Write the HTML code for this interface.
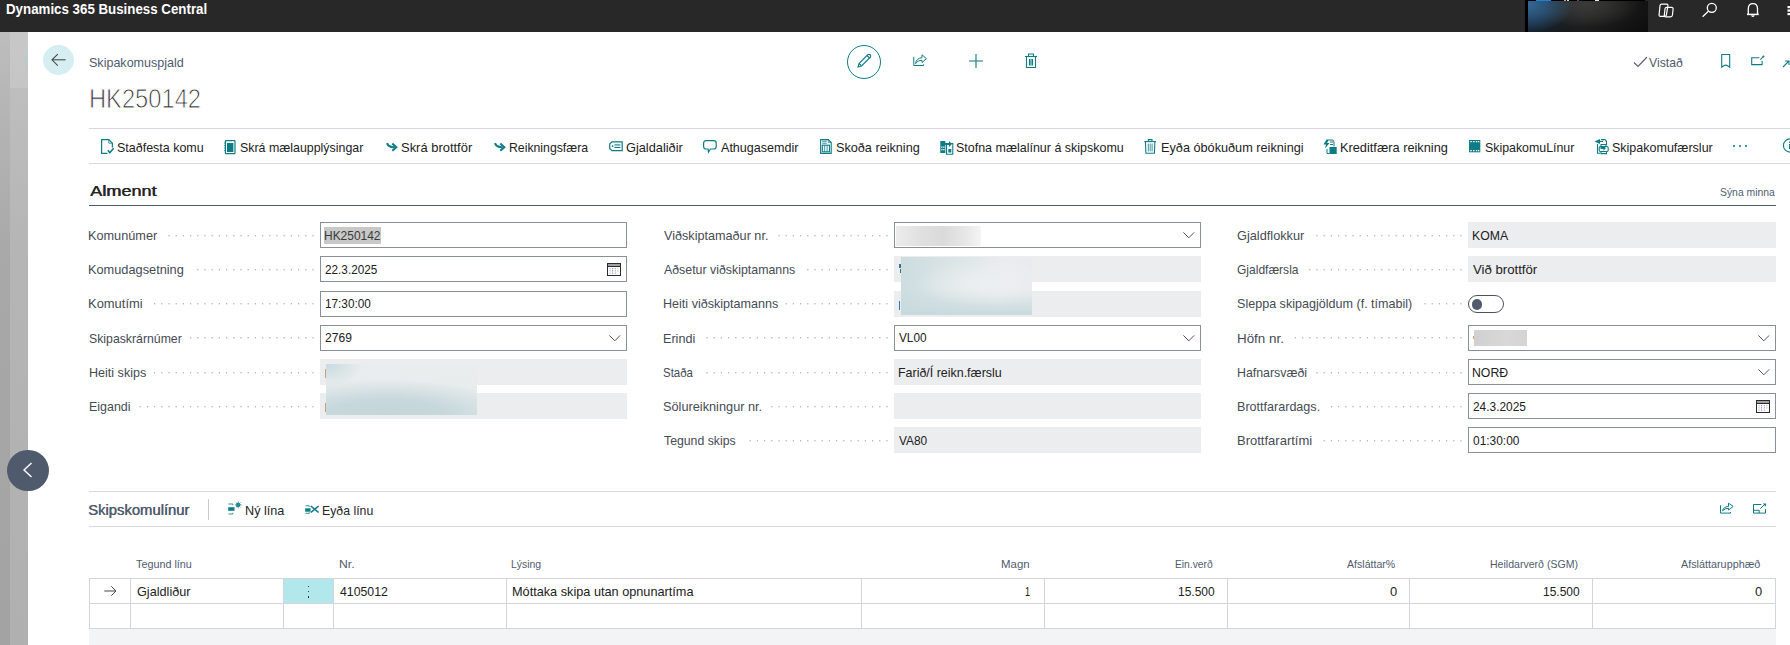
<!DOCTYPE html>
<html><head><meta charset="utf-8"><title>Skipakomuspjald</title>
<style>
html,body{margin:0;padding:0;}
body{width:1790px;height:645px;overflow:hidden;position:relative;background:#fff;font-family:"Liberation Sans",sans-serif;}
.a{position:absolute;}
.t{position:absolute;white-space:nowrap;line-height:1;transform-origin:left top;}
svg.a{overflow:visible;}
</style></head><body>
<div class="a" style="left:0px;top:0px;width:1790px;height:32px;background:#282828;"></div>
<div class="t" style="left:5.70px;top:1.95px;font-size:14px;color:#ffffff;font-weight:700;transform:scaleX(0.9506);">Dynamics 365 Business Central</div>
<div class="a" style="left:1525px;top:0px;width:120px;height:1.3px;background:#000;"></div>
<div class="a" style="left:1536px;top:0px;width:15px;height:1.3px;background:#1f7fd0;"></div>
<div class="a" style="left:1563.5px;top:0px;width:2px;height:1.3px;background:#e0a020;"></div>
<div class="a" style="left:1567px;top:0px;width:2px;height:1.3px;background:#c0d8f0;"></div>
<div class="a" style="left:1577px;top:0px;width:1.2px;height:1.3px;background:#c02020;"></div>
<div class="a" style="left:1578.3px;top:0px;width:1px;height:1.3px;background:#2040c0;"></div>
<div class="a" style="left:1595px;top:0px;width:4px;height:1.3px;background:#f0e8c0;"></div>
<div class="a" style="left:1525px;top:1.3px;width:3px;height:30.7px;background:#000;"></div>
<div class="a" style="left:1528px;top:1.2px;width:120px;height:30.8px;background:radial-gradient(ellipse 38% 90% at 0% 10%,rgba(52,104,150,1) 0%,rgba(45,90,130,0.75) 45%,rgba(40,70,100,0) 100%),radial-gradient(ellipse 45% 75% at 48% 10%,rgba(58,58,56,1),rgba(58,58,56,0) 100%),linear-gradient(180deg,rgba(0,0,0,0) 35%,rgba(0,0,0,0.3) 100%),linear-gradient(90deg,#1c3247 0%,#20262b 28%,#262626 50%,#121212 100%);"></div>
<svg class="a" style="left:1658px;top:3px" width="17" height="15" viewBox="0 0 17 15"><g fill="none" stroke="#fff" stroke-width="1.2"><path d="M3.6 1.2 L8.6 1.2 Q10.2 1.3 9.9 2.9 L8.4 11.8 Q8.1 13.3 6.6 13.3 L2.4 13.3 Q0.9 13.2 1.1 11.7 L2 2.7 Q2.2 1.2 3.6 1.2 Z"/><path d="M8.6 4.3 L13.6 4.3 Q15.3 4.4 15.1 6 L14.4 12.2 Q14.2 13.8 12.6 13.8 L7.6 13.8 Q6.1 13.7 6.3 12.2 L7 5.8 Q7.2 4.3 8.6 4.3 Z"/></g></svg>
<svg class="a" style="left:1701px;top:2px" width="17" height="16" viewBox="0 0 17 16"><g fill="none" stroke="#fff" stroke-width="1.3"><circle cx="10.8" cy="5.8" r="4.5"/><path d="M7.4 9.3 L1.6 14.7"/></g></svg>
<svg class="a" style="left:1745px;top:2px" width="16" height="16" viewBox="0 0 16 16"><g fill="none" stroke="#fff" stroke-width="1.3"><path d="M3.3 12.3 L3.3 6.6 Q3.3 1.6 7.9 1.6 Q12.5 1.6 12.5 6.6 L12.5 12.3"/><path d="M2 12.4 L13.8 12.4" stroke-width="1.5"/><path d="M6.6 13.4 Q7.9 15.2 9.2 13.4"/></g></svg>
<svg class="a" style="left:1786px;top:5px" width="4" height="12" viewBox="0 0 4 12"><g fill="#fff"><rect x="1.5" y="1" width="2.5" height="2.2"/><rect x="1.5" y="4.5" width="2.5" height="2.2"/><rect x="1.5" y="8" width="2.5" height="2.2"/></g></svg>
<div class="a" style="left:0px;top:32px;width:10px;height:613px;background:linear-gradient(#bdbdbd 0px,#b4b4b4 90px,#a8a8a8 230px,#a3a3a3 613px);"></div>
<div class="a" style="left:10px;top:32px;width:18px;height:613px;background:linear-gradient(#c8c8c8 0px,#c5c5c5 56px,#bebebe 56px,#b5b5b5 220px,#b0b0b0 613px);"></div>
<div class="a" style="left:10px;top:40px;width:18px;height:40px;overflow:hidden"><div class="a" style="left:15px;top:4.5px;width:31px;height:31px;border-radius:50%;background:#bacbcd"></div></div>
<div class="a" style="left:7px;top:449.5px;width:41.5px;height:41.5px;border-radius:50%;background:#4f5b6d"></div>
<svg class="a" style="left:22px;top:462px" width="11" height="16" viewBox="0 0 11 16"><path d="M9.5 1 L2 8 L9.5 15" fill="none" stroke="#fff" stroke-width="1.4"/></svg>
<div class="a" style="left:43px;top:45px;width:31px;height:30px;border-radius:50%;background:#d6eef1"></div>
<svg class="a" style="left:50px;top:53px" width="17" height="15" viewBox="0 0 17 15"><g fill="none" stroke="#444" stroke-width="1.05"><path d="M2 6.8 L15.6 6.8"/><path d="M7.8 1.2 L2 6.8 L7.8 12.6"/></g></svg>
<div class="t" style="left:89.07px;top:56.00px;font-size:13px;color:#505c6d;font-weight:400;transform:scaleX(0.9646);">Skipakomuspjald</div>
<div class="t" style="left:89.10px;top:85.01px;font-size:27.4px;color:#2e2e2e;font-weight:400;transform:scaleX(0.8656);-webkit-text-stroke:0.9px #fff">HK250142</div>
<div class="a" style="left:847px;top:45px;width:34px;height:34px;box-sizing:border-box;border-radius:50%;border:1.5px solid #0e7c86"></div>
<svg class="a" style="left:856px;top:53px" width="16" height="16" viewBox="0 0 16 16"><g fill="none" stroke="#0e7c86" stroke-width="1.1"><path d="M2 14 L3 10.5 L12 1.5 Q13.5 1 14.5 2 Q15 3.5 14.5 4 L5.5 13 Z"/><path d="M3 10.5 L5.5 13"/><path d="M11 2.5 L13.5 5"/></g></svg>
<svg class="a" style="left:911px;top:53px" width="17" height="15" viewBox="0 0 17 15"><g fill="none" stroke="#0e7c86" stroke-width="1"><path d="M2.8 3.8 V12.5 H12.6 V11.3"/><path d="M4.6 10.6 C4.8 7 7.5 4.9 11 4.7 L11 1.8 L15.4 5.7 L11 9.5 L11 7.3 C8.2 7.3 6 8.5 4.6 10.6 Z" stroke-linejoin="round"/></g></svg>
<svg class="a" style="left:968px;top:53px" width="16" height="16" viewBox="0 0 16 16"><g stroke="#0e7c86" stroke-width="1.1"><path d="M8 1 L8 15 M1 8 L15 8"/></g></svg>
<svg class="a" style="left:1024px;top:53px" width="14" height="16" viewBox="0 0 14 16"><g fill="none" stroke="#0e7c86" stroke-width="1.1"><path d="M1 3.5 L13 3.5"/><path d="M4.5 3.5 L4.5 1 L9.5 1 L9.5 3.5"/><path d="M2.5 3.5 L2.5 14.5 L11.5 14.5 L11.5 3.5"/><path d="M5.5 6 L5.5 12.5 M7 6 L7 12.5 M8.5 6 L8.5 12.5"/></g></svg>
<svg class="a" style="left:1633px;top:56px" width="15" height="12" viewBox="0 0 15 12"><path d="M1 6.5 L5 10.5 L14 1" fill="none" stroke="#505c6d" stroke-width="1.1"/></svg>
<div class="t" style="left:1649.00px;top:56.00px;font-size:13px;color:#505c6d;font-weight:400;transform:scaleX(0.9411);">Vistað</div>
<svg class="a" style="left:1720px;top:53px" width="12" height="16" viewBox="0 0 12 16"><path d="M1.7 1.5 L9.7 1.5 L9.7 14.2 L7.6 12.7 Q5.7 11.5 3.8 12.7 L1.7 14.2 Z" fill="none" stroke="#0e7c86" stroke-width="1.1"/></svg>
<svg class="a" style="left:1750px;top:54px" width="15" height="13" viewBox="0 0 15 13"><g fill="none" stroke="#0e7c86" stroke-width="1.1"><path d="M9.4 3.7 L1.7 3.7 L1.7 10.6 L12.1 10.6 L12.1 6.7"/><path d="M10.3 5.6 L13.3 2.6"/></g><circle cx="13.5" cy="2.4" r="1" fill="#0e7c86"/></svg>
<svg class="a" style="left:1782px;top:57px" width="8" height="11" viewBox="0 0 8 11"><g fill="none" stroke="#0e7c86" stroke-width="1.1"><path d="M1 10 L7 4 M3 4 L7 4 L7 8"/></g></svg>
<div class="a" style="left:89px;top:128px;width:1701px;height:1px;background:#d5d8dc;"></div>
<div class="a" style="left:89px;top:163px;width:1701px;height:1px;background:#d5d8dc;"></div>
<div class="t" style="left:116.88px;top:140.97px;font-size:13.5px;color:#222222;font-weight:400;transform:scaleX(0.9240);">Staðfesta komu</div>
<div class="t" style="left:240.38px;top:140.97px;font-size:13.5px;color:#222222;font-weight:400;transform:scaleX(0.9182);">Skrá mælaupplýsingar</div>
<div class="t" style="left:401.15px;top:140.97px;font-size:13.5px;color:#222222;font-weight:400;transform:scaleX(0.9586);">Skrá brottför</div>
<div class="t" style="left:509.42px;top:140.97px;font-size:13.5px;color:#222222;font-weight:400;transform:scaleX(0.9082);">Reikningsfæra</div>
<div class="t" style="left:625.76px;top:140.97px;font-size:13.5px;color:#222222;font-weight:400;transform:scaleX(0.9454);">Gjaldaliðir</div>
<div class="t" style="left:720.90px;top:140.97px;font-size:13.5px;color:#222222;font-weight:400;transform:scaleX(0.9307);">Athugasemdir</div>
<div class="t" style="left:835.57px;top:140.97px;font-size:13.5px;color:#222222;font-weight:400;transform:scaleX(0.9379);">Skoða reikning</div>
<div class="t" style="left:956.18px;top:140.97px;font-size:13.5px;color:#222222;font-weight:400;transform:scaleX(0.9236);">Stofna mælalínur á skipskomu</div>
<div class="t" style="left:1160.58px;top:140.97px;font-size:13.5px;color:#222222;font-weight:400;transform:scaleX(0.9405);">Eyða óbókuðum reikningi</div>
<div class="t" style="left:1340.38px;top:140.97px;font-size:13.5px;color:#222222;font-weight:400;transform:scaleX(0.9460);">Kreditfæra reikning</div>
<div class="t" style="left:1485.18px;top:140.97px;font-size:13.5px;color:#222222;font-weight:400;transform:scaleX(0.9156);">SkipakomuLínur</div>
<div class="t" style="left:1612.07px;top:140.97px;font-size:13.5px;color:#222222;font-weight:400;transform:scaleX(0.9262);">Skipakomufærslur</div>
<svg class="a" style="left:100.8px;top:139px" width="15" height="16" viewBox="0 0 15 16"><g fill="none" stroke="#0e7c86" stroke-width="1.2"><path d="M6.5 14.4 L0.6 14.4 L0.6 0.6 L7.8 0.6 L11.4 4.2 L11.4 8.5"/><path d="M7.8 0.6 L7.8 4.2 L11.4 4.2" stroke-width="0.8"/><path d="M6.8 11.3 L8.8 13.8 L12.6 9.2" stroke-width="1.5"/></g></svg>
<svg class="a" style="left:224.2px;top:139.5px" width="15" height="16" viewBox="0 0 15 16"><g><rect x="1.4" y="0.6" width="9.6" height="13" rx="0.6" fill="none" stroke="#0e7c86" stroke-width="1.2"/><rect x="3" y="3" width="6.4" height="9" fill="#0e7c86"/><path d="M0.2 3 h1.6 M0.2 5.5 h1.6 M0.2 8 h1.6 M0.2 10.5 h1.6" stroke="#0e7c86" stroke-width="0.9"/></g></svg>
<svg class="a" style="left:385.8px;top:142.4px" width="15" height="16" viewBox="0 0 15 16"><g fill="none" stroke="#0e7c86" stroke-width="2.1" stroke-linejoin="miter"><path d="M1 1.2 Q2.5 5.5 8.5 5.2"/><path d="M6.3 1.4 L10.3 5.2 L6.3 8.8"/></g></svg>
<svg class="a" style="left:494.4px;top:142.4px" width="15" height="16" viewBox="0 0 15 16"><g fill="none" stroke="#0e7c86" stroke-width="2.1" stroke-linejoin="miter"><path d="M1 1.2 Q2.5 5.5 8.5 5.2"/><path d="M6.3 1.4 L10.3 5.2 L6.3 8.8"/></g></svg>
<svg class="a" style="left:609px;top:140.6px" width="15" height="16" viewBox="0 0 15 16"><g fill="none" stroke="#0e7c86" stroke-width="1.2"><path d="M3 0.8 L13.2 0.8 L13.2 9.7 L3 9.7 L0.7 7.5 L0.7 3 Z"/></g><g fill="#0e7c86"><circle cx="3.6" cy="5.1" r="0.9"/><rect x="5.4" y="3.4" width="6" height="1.1"/><rect x="5.4" y="5.9" width="6" height="1.1"/></g></svg>
<svg class="a" style="left:702.6px;top:139.8px" width="15" height="16" viewBox="0 0 15 16"><path d="M3 0.7 L10.8 0.7 Q13.2 0.7 13.2 3.2 L13.2 6.5 Q13.2 9 10.8 9 L7.5 9 L5.5 12 L5.1 9 L3 9 Q0.6 9 0.6 6.5 L0.6 3.2 Q0.6 0.7 3 0.7 Z" fill="none" stroke="#0e7c86" stroke-width="1.2"/></svg>
<svg class="a" style="left:819.8px;top:139px" width="15" height="16" viewBox="0 0 15 16"><g fill="none" stroke="#0e7c86" stroke-width="1.1"><path d="M0.6 0.6 L8.3 0.6 L11.2 3.5 L11.2 14.4 L0.6 14.4 Z"/><path d="M8.3 0.6 L8.3 3.5 L11.2 3.5" stroke-width="0.7"/><path d="M2.2 2.2 h4.5 M2.2 4.2 h4.5" stroke-width="0.9"/><rect x="2.3" y="6.2" width="7.2" height="6.6"/><path d="M4.7 6.2 v6.6 M7.1 6.2 v6.6" stroke-width="0.8"/></g></svg>
<svg class="a" style="left:940px;top:139.8px" width="15" height="16" viewBox="0 0 15 16"><g fill="#0e7c86"><rect x="0.3" y="1" width="5" height="12" /><path d="M6.5 3.5 L12.8 3.5 L12.8 14.2 L6.5 14.2 Z" fill="none" stroke="#0e7c86" stroke-width="1.1"/><path d="M4.5 3 L9 3 L9 1 L12 4 L9 7 L9 5 L4.5 5 Z"/><rect x="8.3" y="9" width="3" height="3.5"/></g><g fill="#fff"><rect x="1.2" y="6.5" width="1.3" height="1.3"/><rect x="3.2" y="6.5" width="1.3" height="1.3"/><rect x="1.2" y="9" width="1.3" height="1.3"/><rect x="3.2" y="9" width="1.3" height="1.3"/></g></svg>
<svg class="a" style="left:1144px;top:139px" width="15" height="16" viewBox="0 0 15 16"><g fill="none" stroke="#0e7c86" stroke-width="1.1"><path d="M0.3 2.6 L12 2.6"/><path d="M4.3 2.4 L4.3 0.6 L8 0.6 L8 2.4"/><path d="M1.4 2.6 L1.9 14.3 L10.4 14.3 L10.9 2.6"/></g><g fill="#0e7c86" opacity="0.8"><rect x="3.8" y="4.6" width="1" height="7.8"/><rect x="5.7" y="4.6" width="1" height="7.8"/><rect x="7.6" y="4.6" width="1" height="7.8"/></g></svg>
<svg class="a" style="left:1323px;top:139px" width="15" height="16" viewBox="0 0 15 16"><g fill="#0e7c86"><path d="M3.5 0.5 L6 0.5 L4 4 L6.5 4 L2 9.5 L3 5.5 L0.5 5.5 Z"/><rect x="6.5" y="8" width="7.2" height="7"/></g><g fill="none" stroke="#0e7c86" stroke-width="1"><path d="M5.5 1 L10 1 L11 3 L11 7.5"/><path d="M4 10 L4 14.5 L6.5 14.5"/><path d="M7 3 h3 M7 5.5 h3"/></g></svg>
<svg class="a" style="left:1469px;top:139.8px" width="15" height="16" viewBox="0 0 15 16"><g><rect x="0" y="0" width="11.3" height="12.3" fill="#0e7c86"/><g fill="#fff"><rect x="1.2" y="1" width="1.5" height="1.3"/><rect x="4" y="1" width="1.5" height="1.3"/><rect x="6.8" y="1" width="1.5" height="1.3"/><rect x="9" y="1" width="1.3" height="1.3"/><rect x="1.2" y="10" width="1.5" height="1.3"/><rect x="4" y="10" width="1.5" height="1.3"/><rect x="6.8" y="10" width="1.5" height="1.3"/><rect x="9" y="10" width="1.3" height="1.3"/></g></g></svg>
<svg class="a" style="left:1595.4px;top:139px" width="15" height="16" viewBox="0 0 15 16"><g fill="none" stroke="#0e7c86" stroke-width="1.1"><path d="M2.5 5 L2.5 14.3 L5 14.3"/><path d="M6 0.6 L10 0.6 L11.5 2.5 L11.5 6"/><path d="M0.8 2.5 L4.5 0.8 L4.5 4.2 Z" fill="#0e7c86"/><path d="M4.5 2.5 L8 2.5"/><rect x="4.2" y="7.5" width="9" height="5" rx="1.2"/><path d="M6 12.5 L6 14.6 L11.5 14.6 L11.5 12.5"/><path d="M6 7.5 L6 5.5 L11 5.5 L11 7.5"/></g><path d="M5.5 8 L8.5 8 L8.5 6.5 L11 9 L8.5 11.5 L8.5 10 L5.5 10 Z" fill="#0e7c86"/></svg>
<div class="a" style="left:1733.3px;top:145px;width:1.8px;height:1.8px;background:#0e7c86;border-radius:50%"></div>
<div class="a" style="left:1739.1px;top:145px;width:1.8px;height:1.8px;background:#0e7c86;border-radius:50%"></div>
<div class="a" style="left:1744.8999999999999px;top:145px;width:1.8px;height:1.8px;background:#0e7c86;border-radius:50%"></div>
<svg class="a" style="left:1782px;top:138px" width="8" height="16" viewBox="0 0 8 16"><circle cx="8" cy="7.5" r="6.6" fill="none" stroke="#0e7c86" stroke-width="1.1"/><path d="M7.6 6 v5 M7.6 3.6 v1.2" stroke="#0e7c86" stroke-width="1.2"/></svg>
<div class="t" style="left:89.50px;top:184.27px;font-size:14.8px;color:#262626;font-weight:400;transform:scaleX(1.2221);text-shadow:0.5px 0 0 #262626">Almennt</div>
<div class="t" style="left:1720.38px;top:187.32px;font-size:11.2px;color:#505c6d;font-weight:400;transform:scaleX(0.9287);">Sýna minna</div>
<div class="a" style="left:89px;top:205px;width:1687px;height:1.2px;background:#505c6d;"></div>
<div class="t" style="left:88.48px;top:230.03px;font-size:12.6px;color:#454b54;font-weight:400;transform:scaleX(1.0088);">Komunúmer</div>
<svg class="a" style="left:170px;top:234.90px" width="150" height="2" viewBox="0 0 150 2"><g fill="#b0b5bc"><rect x="142.40" y="0" width="1.2" height="1.4"/><rect x="135.20" y="0" width="1.2" height="1.4"/><rect x="128.00" y="0" width="1.2" height="1.4"/><rect x="120.80" y="0" width="1.2" height="1.4"/><rect x="113.60" y="0" width="1.2" height="1.4"/><rect x="106.40" y="0" width="1.2" height="1.4"/><rect x="99.20" y="0" width="1.2" height="1.4"/><rect x="92.00" y="0" width="1.2" height="1.4"/><rect x="84.80" y="0" width="1.2" height="1.4"/><rect x="77.60" y="0" width="1.2" height="1.4"/><rect x="70.40" y="0" width="1.2" height="1.4"/><rect x="63.20" y="0" width="1.2" height="1.4"/><rect x="56.00" y="0" width="1.2" height="1.4"/><rect x="48.80" y="0" width="1.2" height="1.4"/><rect x="41.60" y="0" width="1.2" height="1.4"/><rect x="34.40" y="0" width="1.2" height="1.4"/><rect x="27.20" y="0" width="1.2" height="1.4"/><rect x="20.00" y="0" width="1.2" height="1.4"/><rect x="12.80" y="0" width="1.2" height="1.4"/><rect x="5.60" y="0" width="1.2" height="1.4"/><rect x="-1.60" y="0" width="1.2" height="1.4"/></g></svg>
<div class="a" style="left:320px;top:222.30px;width:307px;height:26px;box-sizing:border-box;border:1px solid #8a9098;background:#fff"></div>
<div class="a" style="left:324px;top:227.30px;width:57px;height:16.5px;background:#c8c8c8;"></div>
<div class="t" style="left:324.44px;top:229.86px;font-size:12.8px;color:#3a3a3a;font-weight:400;transform:scaleX(0.9341);">HK250142</div>
<div class="t" style="left:88.48px;top:264.20px;font-size:12.6px;color:#454b54;font-weight:400;transform:scaleX(1.0136);">Komudagsetning</div>
<svg class="a" style="left:170px;top:269.07px" width="150" height="2" viewBox="0 0 150 2"><g fill="#b0b5bc"><rect x="142.40" y="0" width="1.2" height="1.4"/><rect x="135.20" y="0" width="1.2" height="1.4"/><rect x="128.00" y="0" width="1.2" height="1.4"/><rect x="120.80" y="0" width="1.2" height="1.4"/><rect x="113.60" y="0" width="1.2" height="1.4"/><rect x="106.40" y="0" width="1.2" height="1.4"/><rect x="99.20" y="0" width="1.2" height="1.4"/><rect x="92.00" y="0" width="1.2" height="1.4"/><rect x="84.80" y="0" width="1.2" height="1.4"/><rect x="77.60" y="0" width="1.2" height="1.4"/><rect x="70.40" y="0" width="1.2" height="1.4"/><rect x="63.20" y="0" width="1.2" height="1.4"/><rect x="56.00" y="0" width="1.2" height="1.4"/><rect x="48.80" y="0" width="1.2" height="1.4"/><rect x="41.60" y="0" width="1.2" height="1.4"/><rect x="34.40" y="0" width="1.2" height="1.4"/><rect x="27.20" y="0" width="1.2" height="1.4"/></g></svg>
<div class="a" style="left:320px;top:256.47px;width:307px;height:26px;box-sizing:border-box;border:1px solid #8a9098;background:#fff"></div>
<div class="t" style="left:324.81px;top:264.03px;font-size:12.8px;color:#212121;font-weight:400;transform:scaleX(0.9192);">22.3.2025</div>
<svg class="a" style="left:607px;top:263px" width="15" height="14" viewBox="0 0 15 14"><rect x="0.5" y="0.5" width="13" height="12" fill="none" stroke="#2a2a2a" stroke-width="1"/><rect x="1" y="1" width="12" height="2" fill="#a0a0a0"/><path d="M0.5 3.5 H13.5" stroke="#2a2a2a" stroke-width="1"/><g stroke-width="1" stroke-dasharray="1 1.2"><path d="M3 5.2 V10.6" stroke="#7fa0d0"/><path d="M5.6 5.2 V10.6" stroke="#8a5aa0"/><path d="M8.3 5.2 V10.6" stroke="#5a90d0"/><path d="M10.8 5.2 V9" stroke="#d09a70"/></g></svg>
<div class="t" style="left:88.46px;top:298.37px;font-size:12.6px;color:#454b54;font-weight:400;transform:scaleX(1.0271);">Komutími</div>
<svg class="a" style="left:170px;top:303.23px" width="150" height="2" viewBox="0 0 150 2"><g fill="#b0b5bc"><rect x="142.40" y="0" width="1.2" height="1.4"/><rect x="135.20" y="0" width="1.2" height="1.4"/><rect x="128.00" y="0" width="1.2" height="1.4"/><rect x="120.80" y="0" width="1.2" height="1.4"/><rect x="113.60" y="0" width="1.2" height="1.4"/><rect x="106.40" y="0" width="1.2" height="1.4"/><rect x="99.20" y="0" width="1.2" height="1.4"/><rect x="92.00" y="0" width="1.2" height="1.4"/><rect x="84.80" y="0" width="1.2" height="1.4"/><rect x="77.60" y="0" width="1.2" height="1.4"/><rect x="70.40" y="0" width="1.2" height="1.4"/><rect x="63.20" y="0" width="1.2" height="1.4"/><rect x="56.00" y="0" width="1.2" height="1.4"/><rect x="48.80" y="0" width="1.2" height="1.4"/><rect x="41.60" y="0" width="1.2" height="1.4"/><rect x="34.40" y="0" width="1.2" height="1.4"/><rect x="27.20" y="0" width="1.2" height="1.4"/><rect x="20.00" y="0" width="1.2" height="1.4"/><rect x="12.80" y="0" width="1.2" height="1.4"/><rect x="5.60" y="0" width="1.2" height="1.4"/><rect x="-1.60" y="0" width="1.2" height="1.4"/><rect x="-8.80" y="0" width="1.2" height="1.4"/><rect x="-16.00" y="0" width="1.2" height="1.4"/></g></svg>
<div class="a" style="left:320px;top:290.63px;width:307px;height:26px;box-sizing:border-box;border:1px solid #8a9098;background:#fff"></div>
<div class="t" style="left:324.58px;top:298.20px;font-size:12.8px;color:#212121;font-weight:400;transform:scaleX(0.9194);">17:30:00</div>
<div class="t" style="left:88.89px;top:332.53px;font-size:12.6px;color:#454b54;font-weight:400;transform:scaleX(0.9748);">Skipaskrárnúmer</div>
<svg class="a" style="left:170px;top:337.40px" width="150" height="2" viewBox="0 0 150 2"><g fill="#b0b5bc"><rect x="142.40" y="0" width="1.2" height="1.4"/><rect x="135.20" y="0" width="1.2" height="1.4"/><rect x="128.00" y="0" width="1.2" height="1.4"/><rect x="120.80" y="0" width="1.2" height="1.4"/><rect x="113.60" y="0" width="1.2" height="1.4"/><rect x="106.40" y="0" width="1.2" height="1.4"/><rect x="99.20" y="0" width="1.2" height="1.4"/><rect x="92.00" y="0" width="1.2" height="1.4"/><rect x="84.80" y="0" width="1.2" height="1.4"/><rect x="77.60" y="0" width="1.2" height="1.4"/><rect x="70.40" y="0" width="1.2" height="1.4"/><rect x="63.20" y="0" width="1.2" height="1.4"/><rect x="56.00" y="0" width="1.2" height="1.4"/><rect x="48.80" y="0" width="1.2" height="1.4"/><rect x="41.60" y="0" width="1.2" height="1.4"/><rect x="34.40" y="0" width="1.2" height="1.4"/><rect x="27.20" y="0" width="1.2" height="1.4"/><rect x="20.00" y="0" width="1.2" height="1.4"/></g></svg>
<div class="a" style="left:320px;top:324.80px;width:307px;height:26px;box-sizing:border-box;border:1px solid #8a9098;background:#fff"></div>
<div class="t" style="left:324.80px;top:332.36px;font-size:12.8px;color:#212121;font-weight:400;transform:scaleX(0.9426);">2769</div>
<svg class="a" style="left:609px;top:332.80010000000004px" width="12" height="10" viewBox="0 0 12 10"><path d="M0.4 2.4 L5.8 7.8 L11.2 2.4" fill="none" stroke="#3a3f46" stroke-width="0.9"/></svg>
<div class="t" style="left:88.50px;top:366.70px;font-size:12.6px;color:#454b54;font-weight:400;transform:scaleX(0.9970);">Heiti skips</div>
<svg class="a" style="left:170px;top:371.57px" width="150" height="2" viewBox="0 0 150 2"><g fill="#b0b5bc"><rect x="142.40" y="0" width="1.2" height="1.4"/><rect x="135.20" y="0" width="1.2" height="1.4"/><rect x="128.00" y="0" width="1.2" height="1.4"/><rect x="120.80" y="0" width="1.2" height="1.4"/><rect x="113.60" y="0" width="1.2" height="1.4"/><rect x="106.40" y="0" width="1.2" height="1.4"/><rect x="99.20" y="0" width="1.2" height="1.4"/><rect x="92.00" y="0" width="1.2" height="1.4"/><rect x="84.80" y="0" width="1.2" height="1.4"/><rect x="77.60" y="0" width="1.2" height="1.4"/><rect x="70.40" y="0" width="1.2" height="1.4"/><rect x="63.20" y="0" width="1.2" height="1.4"/><rect x="56.00" y="0" width="1.2" height="1.4"/><rect x="48.80" y="0" width="1.2" height="1.4"/><rect x="41.60" y="0" width="1.2" height="1.4"/><rect x="34.40" y="0" width="1.2" height="1.4"/><rect x="27.20" y="0" width="1.2" height="1.4"/><rect x="20.00" y="0" width="1.2" height="1.4"/><rect x="12.80" y="0" width="1.2" height="1.4"/><rect x="5.60" y="0" width="1.2" height="1.4"/><rect x="-1.60" y="0" width="1.2" height="1.4"/><rect x="-8.80" y="0" width="1.2" height="1.4"/><rect x="-16.00" y="0" width="1.2" height="1.4"/></g></svg>
<div class="a" style="left:320px;top:358.97px;width:307px;height:26px;background:#ebedef;"></div>
<div class="t" style="left:88.50px;top:400.87px;font-size:12.6px;color:#454b54;font-weight:400;transform:scaleX(0.9877);">Eigandi</div>
<svg class="a" style="left:170px;top:405.73px" width="150" height="2" viewBox="0 0 150 2"><g fill="#b0b5bc"><rect x="142.40" y="0" width="1.2" height="1.4"/><rect x="135.20" y="0" width="1.2" height="1.4"/><rect x="128.00" y="0" width="1.2" height="1.4"/><rect x="120.80" y="0" width="1.2" height="1.4"/><rect x="113.60" y="0" width="1.2" height="1.4"/><rect x="106.40" y="0" width="1.2" height="1.4"/><rect x="99.20" y="0" width="1.2" height="1.4"/><rect x="92.00" y="0" width="1.2" height="1.4"/><rect x="84.80" y="0" width="1.2" height="1.4"/><rect x="77.60" y="0" width="1.2" height="1.4"/><rect x="70.40" y="0" width="1.2" height="1.4"/><rect x="63.20" y="0" width="1.2" height="1.4"/><rect x="56.00" y="0" width="1.2" height="1.4"/><rect x="48.80" y="0" width="1.2" height="1.4"/><rect x="41.60" y="0" width="1.2" height="1.4"/><rect x="34.40" y="0" width="1.2" height="1.4"/><rect x="27.20" y="0" width="1.2" height="1.4"/><rect x="20.00" y="0" width="1.2" height="1.4"/><rect x="12.80" y="0" width="1.2" height="1.4"/><rect x="5.60" y="0" width="1.2" height="1.4"/><rect x="-1.60" y="0" width="1.2" height="1.4"/><rect x="-8.80" y="0" width="1.2" height="1.4"/><rect x="-16.00" y="0" width="1.2" height="1.4"/><rect x="-23.20" y="0" width="1.2" height="1.4"/><rect x="-30.40" y="0" width="1.2" height="1.4"/></g></svg>
<div class="a" style="left:320px;top:393.13px;width:307px;height:26px;background:#ebedef;"></div>
<div class="t" style="left:664.00px;top:230.03px;font-size:12.6px;color:#454b54;font-weight:400;transform:scaleX(1.0032);">Viðskiptamaður nr.</div>
<svg class="a" style="left:744px;top:234.90px" width="150" height="2" viewBox="0 0 150 2"><g fill="#b0b5bc"><rect x="142.40" y="0" width="1.2" height="1.4"/><rect x="135.20" y="0" width="1.2" height="1.4"/><rect x="128.00" y="0" width="1.2" height="1.4"/><rect x="120.80" y="0" width="1.2" height="1.4"/><rect x="113.60" y="0" width="1.2" height="1.4"/><rect x="106.40" y="0" width="1.2" height="1.4"/><rect x="99.20" y="0" width="1.2" height="1.4"/><rect x="92.00" y="0" width="1.2" height="1.4"/><rect x="84.80" y="0" width="1.2" height="1.4"/><rect x="77.60" y="0" width="1.2" height="1.4"/><rect x="70.40" y="0" width="1.2" height="1.4"/><rect x="63.20" y="0" width="1.2" height="1.4"/><rect x="56.00" y="0" width="1.2" height="1.4"/><rect x="48.80" y="0" width="1.2" height="1.4"/><rect x="41.60" y="0" width="1.2" height="1.4"/><rect x="34.40" y="0" width="1.2" height="1.4"/></g></svg>
<div class="a" style="left:894px;top:222.30px;width:307px;height:26px;box-sizing:border-box;border:1px solid #8a9098;background:#fff"></div>
<svg class="a" style="left:1183px;top:230.3px" width="12" height="10" viewBox="0 0 12 10"><path d="M0.4 2.4 L5.8 7.8 L11.2 2.4" fill="none" stroke="#3a3f46" stroke-width="0.9"/></svg>
<div class="t" style="left:664.00px;top:264.20px;font-size:12.6px;color:#454b54;font-weight:400;transform:scaleX(0.9818);">Aðsetur viðskiptamanns</div>
<svg class="a" style="left:744px;top:269.07px" width="150" height="2" viewBox="0 0 150 2"><g fill="#b0b5bc"><rect x="142.40" y="0" width="1.2" height="1.4"/><rect x="135.20" y="0" width="1.2" height="1.4"/><rect x="128.00" y="0" width="1.2" height="1.4"/><rect x="120.80" y="0" width="1.2" height="1.4"/><rect x="113.60" y="0" width="1.2" height="1.4"/><rect x="106.40" y="0" width="1.2" height="1.4"/><rect x="99.20" y="0" width="1.2" height="1.4"/><rect x="92.00" y="0" width="1.2" height="1.4"/><rect x="84.80" y="0" width="1.2" height="1.4"/><rect x="77.60" y="0" width="1.2" height="1.4"/><rect x="70.40" y="0" width="1.2" height="1.4"/><rect x="63.20" y="0" width="1.2" height="1.4"/></g></svg>
<div class="a" style="left:894px;top:256.47px;width:307px;height:26px;background:#ebedef;"></div>
<div class="t" style="left:662.99px;top:298.37px;font-size:12.6px;color:#454b54;font-weight:400;transform:scaleX(0.9986);">Heiti viðskiptamanns</div>
<svg class="a" style="left:744px;top:303.23px" width="150" height="2" viewBox="0 0 150 2"><g fill="#b0b5bc"><rect x="142.40" y="0" width="1.2" height="1.4"/><rect x="135.20" y="0" width="1.2" height="1.4"/><rect x="128.00" y="0" width="1.2" height="1.4"/><rect x="120.80" y="0" width="1.2" height="1.4"/><rect x="113.60" y="0" width="1.2" height="1.4"/><rect x="106.40" y="0" width="1.2" height="1.4"/><rect x="99.20" y="0" width="1.2" height="1.4"/><rect x="92.00" y="0" width="1.2" height="1.4"/><rect x="84.80" y="0" width="1.2" height="1.4"/><rect x="77.60" y="0" width="1.2" height="1.4"/><rect x="70.40" y="0" width="1.2" height="1.4"/><rect x="63.20" y="0" width="1.2" height="1.4"/><rect x="56.00" y="0" width="1.2" height="1.4"/><rect x="48.80" y="0" width="1.2" height="1.4"/><rect x="41.60" y="0" width="1.2" height="1.4"/></g></svg>
<div class="a" style="left:894px;top:290.63px;width:307px;height:26px;background:#ebedef;"></div>
<div class="t" style="left:662.99px;top:332.53px;font-size:12.6px;color:#454b54;font-weight:400;transform:scaleX(1.0011);">Erindi</div>
<svg class="a" style="left:744px;top:337.40px" width="150" height="2" viewBox="0 0 150 2"><g fill="#b0b5bc"><rect x="142.40" y="0" width="1.2" height="1.4"/><rect x="135.20" y="0" width="1.2" height="1.4"/><rect x="128.00" y="0" width="1.2" height="1.4"/><rect x="120.80" y="0" width="1.2" height="1.4"/><rect x="113.60" y="0" width="1.2" height="1.4"/><rect x="106.40" y="0" width="1.2" height="1.4"/><rect x="99.20" y="0" width="1.2" height="1.4"/><rect x="92.00" y="0" width="1.2" height="1.4"/><rect x="84.80" y="0" width="1.2" height="1.4"/><rect x="77.60" y="0" width="1.2" height="1.4"/><rect x="70.40" y="0" width="1.2" height="1.4"/><rect x="63.20" y="0" width="1.2" height="1.4"/><rect x="56.00" y="0" width="1.2" height="1.4"/><rect x="48.80" y="0" width="1.2" height="1.4"/><rect x="41.60" y="0" width="1.2" height="1.4"/><rect x="34.40" y="0" width="1.2" height="1.4"/><rect x="27.20" y="0" width="1.2" height="1.4"/><rect x="20.00" y="0" width="1.2" height="1.4"/><rect x="12.80" y="0" width="1.2" height="1.4"/><rect x="5.60" y="0" width="1.2" height="1.4"/><rect x="-1.60" y="0" width="1.2" height="1.4"/><rect x="-8.80" y="0" width="1.2" height="1.4"/><rect x="-16.00" y="0" width="1.2" height="1.4"/><rect x="-23.20" y="0" width="1.2" height="1.4"/><rect x="-30.40" y="0" width="1.2" height="1.4"/><rect x="-37.60" y="0" width="1.2" height="1.4"/></g></svg>
<div class="a" style="left:894px;top:324.80px;width:307px;height:26px;box-sizing:border-box;border:1px solid #8a9098;background:#fff"></div>
<div class="t" style="left:899.40px;top:332.36px;font-size:12.8px;color:#212121;font-weight:400;transform:scaleX(0.9205);">VL00</div>
<svg class="a" style="left:1183px;top:332.80010000000004px" width="12" height="10" viewBox="0 0 12 10"><path d="M0.4 2.4 L5.8 7.8 L11.2 2.4" fill="none" stroke="#3a3f46" stroke-width="0.9"/></svg>
<div class="t" style="left:663.43px;top:366.70px;font-size:12.6px;color:#454b54;font-weight:400;transform:scaleX(0.9079);">Staða</div>
<svg class="a" style="left:744px;top:371.57px" width="150" height="2" viewBox="0 0 150 2"><g fill="#b0b5bc"><rect x="142.40" y="0" width="1.2" height="1.4"/><rect x="135.20" y="0" width="1.2" height="1.4"/><rect x="128.00" y="0" width="1.2" height="1.4"/><rect x="120.80" y="0" width="1.2" height="1.4"/><rect x="113.60" y="0" width="1.2" height="1.4"/><rect x="106.40" y="0" width="1.2" height="1.4"/><rect x="99.20" y="0" width="1.2" height="1.4"/><rect x="92.00" y="0" width="1.2" height="1.4"/><rect x="84.80" y="0" width="1.2" height="1.4"/><rect x="77.60" y="0" width="1.2" height="1.4"/><rect x="70.40" y="0" width="1.2" height="1.4"/><rect x="63.20" y="0" width="1.2" height="1.4"/><rect x="56.00" y="0" width="1.2" height="1.4"/><rect x="48.80" y="0" width="1.2" height="1.4"/><rect x="41.60" y="0" width="1.2" height="1.4"/><rect x="34.40" y="0" width="1.2" height="1.4"/><rect x="27.20" y="0" width="1.2" height="1.4"/><rect x="20.00" y="0" width="1.2" height="1.4"/><rect x="12.80" y="0" width="1.2" height="1.4"/><rect x="5.60" y="0" width="1.2" height="1.4"/><rect x="-1.60" y="0" width="1.2" height="1.4"/><rect x="-8.80" y="0" width="1.2" height="1.4"/><rect x="-16.00" y="0" width="1.2" height="1.4"/><rect x="-23.20" y="0" width="1.2" height="1.4"/><rect x="-30.40" y="0" width="1.2" height="1.4"/><rect x="-37.60" y="0" width="1.2" height="1.4"/></g></svg>
<div class="a" style="left:894px;top:358.97px;width:307px;height:26px;background:#ebedef;"></div>
<div class="t" style="left:898.40px;top:366.53px;font-size:12.8px;color:#212121;font-weight:400;transform:scaleX(0.9720);">Farið/Í reikn.færslu</div>
<div class="t" style="left:663.36px;top:400.87px;font-size:12.6px;color:#454b54;font-weight:400;transform:scaleX(1.0118);">Sölureikningur nr.</div>
<svg class="a" style="left:744px;top:405.73px" width="150" height="2" viewBox="0 0 150 2"><g fill="#b0b5bc"><rect x="142.40" y="0" width="1.2" height="1.4"/><rect x="135.20" y="0" width="1.2" height="1.4"/><rect x="128.00" y="0" width="1.2" height="1.4"/><rect x="120.80" y="0" width="1.2" height="1.4"/><rect x="113.60" y="0" width="1.2" height="1.4"/><rect x="106.40" y="0" width="1.2" height="1.4"/><rect x="99.20" y="0" width="1.2" height="1.4"/><rect x="92.00" y="0" width="1.2" height="1.4"/><rect x="84.80" y="0" width="1.2" height="1.4"/><rect x="77.60" y="0" width="1.2" height="1.4"/><rect x="70.40" y="0" width="1.2" height="1.4"/><rect x="63.20" y="0" width="1.2" height="1.4"/><rect x="56.00" y="0" width="1.2" height="1.4"/><rect x="48.80" y="0" width="1.2" height="1.4"/><rect x="41.60" y="0" width="1.2" height="1.4"/><rect x="34.40" y="0" width="1.2" height="1.4"/><rect x="27.20" y="0" width="1.2" height="1.4"/></g></svg>
<div class="a" style="left:894px;top:393.13px;width:307px;height:26px;background:#ebedef;"></div>
<div class="t" style="left:663.75px;top:435.03px;font-size:12.6px;color:#454b54;font-weight:400;transform:scaleX(0.9746);">Tegund skips</div>
<svg class="a" style="left:744px;top:439.90px" width="150" height="2" viewBox="0 0 150 2"><g fill="#b0b5bc"><rect x="142.40" y="0" width="1.2" height="1.4"/><rect x="135.20" y="0" width="1.2" height="1.4"/><rect x="128.00" y="0" width="1.2" height="1.4"/><rect x="120.80" y="0" width="1.2" height="1.4"/><rect x="113.60" y="0" width="1.2" height="1.4"/><rect x="106.40" y="0" width="1.2" height="1.4"/><rect x="99.20" y="0" width="1.2" height="1.4"/><rect x="92.00" y="0" width="1.2" height="1.4"/><rect x="84.80" y="0" width="1.2" height="1.4"/><rect x="77.60" y="0" width="1.2" height="1.4"/><rect x="70.40" y="0" width="1.2" height="1.4"/><rect x="63.20" y="0" width="1.2" height="1.4"/><rect x="56.00" y="0" width="1.2" height="1.4"/><rect x="48.80" y="0" width="1.2" height="1.4"/><rect x="41.60" y="0" width="1.2" height="1.4"/><rect x="34.40" y="0" width="1.2" height="1.4"/><rect x="27.20" y="0" width="1.2" height="1.4"/><rect x="20.00" y="0" width="1.2" height="1.4"/><rect x="12.80" y="0" width="1.2" height="1.4"/><rect x="5.60" y="0" width="1.2" height="1.4"/></g></svg>
<div class="a" style="left:894px;top:427.30px;width:307px;height:26px;background:#ebedef;"></div>
<div class="t" style="left:899.40px;top:434.87px;font-size:12.8px;color:#212121;font-weight:400;transform:scaleX(0.9282);">VA80</div>
<div class="t" style="left:1237.36px;top:230.03px;font-size:12.6px;color:#454b54;font-weight:400;transform:scaleX(1.0126);">Gjaldflokkur</div>
<svg class="a" style="left:1318px;top:234.90px" width="150" height="2" viewBox="0 0 150 2"><g fill="#b0b5bc"><rect x="142.40" y="0" width="1.2" height="1.4"/><rect x="135.20" y="0" width="1.2" height="1.4"/><rect x="128.00" y="0" width="1.2" height="1.4"/><rect x="120.80" y="0" width="1.2" height="1.4"/><rect x="113.60" y="0" width="1.2" height="1.4"/><rect x="106.40" y="0" width="1.2" height="1.4"/><rect x="99.20" y="0" width="1.2" height="1.4"/><rect x="92.00" y="0" width="1.2" height="1.4"/><rect x="84.80" y="0" width="1.2" height="1.4"/><rect x="77.60" y="0" width="1.2" height="1.4"/><rect x="70.40" y="0" width="1.2" height="1.4"/><rect x="63.20" y="0" width="1.2" height="1.4"/><rect x="56.00" y="0" width="1.2" height="1.4"/><rect x="48.80" y="0" width="1.2" height="1.4"/><rect x="41.60" y="0" width="1.2" height="1.4"/><rect x="34.40" y="0" width="1.2" height="1.4"/><rect x="27.20" y="0" width="1.2" height="1.4"/><rect x="20.00" y="0" width="1.2" height="1.4"/><rect x="12.80" y="0" width="1.2" height="1.4"/><rect x="5.60" y="0" width="1.2" height="1.4"/><rect x="-1.60" y="0" width="1.2" height="1.4"/></g></svg>
<div class="a" style="left:1468px;top:222.30px;width:308px;height:26px;background:#ebedef;"></div>
<div class="t" style="left:1472.42px;top:229.86px;font-size:12.8px;color:#212121;font-weight:400;transform:scaleX(0.9582);">KOMA</div>
<div class="t" style="left:1237.40px;top:264.20px;font-size:12.6px;color:#454b54;font-weight:400;transform:scaleX(0.9549);">Gjaldfærsla</div>
<svg class="a" style="left:1318px;top:269.07px" width="150" height="2" viewBox="0 0 150 2"><g fill="#b0b5bc"><rect x="142.40" y="0" width="1.2" height="1.4"/><rect x="135.20" y="0" width="1.2" height="1.4"/><rect x="128.00" y="0" width="1.2" height="1.4"/><rect x="120.80" y="0" width="1.2" height="1.4"/><rect x="113.60" y="0" width="1.2" height="1.4"/><rect x="106.40" y="0" width="1.2" height="1.4"/><rect x="99.20" y="0" width="1.2" height="1.4"/><rect x="92.00" y="0" width="1.2" height="1.4"/><rect x="84.80" y="0" width="1.2" height="1.4"/><rect x="77.60" y="0" width="1.2" height="1.4"/><rect x="70.40" y="0" width="1.2" height="1.4"/><rect x="63.20" y="0" width="1.2" height="1.4"/><rect x="56.00" y="0" width="1.2" height="1.4"/><rect x="48.80" y="0" width="1.2" height="1.4"/><rect x="41.60" y="0" width="1.2" height="1.4"/><rect x="34.40" y="0" width="1.2" height="1.4"/><rect x="27.20" y="0" width="1.2" height="1.4"/><rect x="20.00" y="0" width="1.2" height="1.4"/><rect x="12.80" y="0" width="1.2" height="1.4"/><rect x="5.60" y="0" width="1.2" height="1.4"/><rect x="-1.60" y="0" width="1.2" height="1.4"/><rect x="-8.80" y="0" width="1.2" height="1.4"/></g></svg>
<div class="a" style="left:1468px;top:256.47px;width:308px;height:26px;background:#ebedef;"></div>
<div class="t" style="left:1473.40px;top:264.03px;font-size:12.8px;color:#212121;font-weight:400;transform:scaleX(1.0304);">Við brottför</div>
<div class="t" style="left:1237.37px;top:298.37px;font-size:12.6px;color:#454b54;font-weight:400;transform:scaleX(0.9978);">Sleppa skipagjöldum (f. tímabil)</div>
<svg class="a" style="left:1318px;top:303.23px" width="150" height="2" viewBox="0 0 150 2"><g fill="#b0b5bc"><rect x="142.40" y="0" width="1.2" height="1.4"/><rect x="135.20" y="0" width="1.2" height="1.4"/><rect x="128.00" y="0" width="1.2" height="1.4"/><rect x="120.80" y="0" width="1.2" height="1.4"/><rect x="113.60" y="0" width="1.2" height="1.4"/><rect x="106.40" y="0" width="1.2" height="1.4"/></g></svg>
<div class="a" style="left:1468px;top:295.13px;width:36px;height:18px;box-sizing:border-box;border:1px solid #4a5262;border-radius:9px"></div>
<div class="a" style="left:1471.9px;top:299.23px;width:10.4px;height:10.4px;border-radius:50%;background:#505c6d"></div>
<div class="t" style="left:1236.93px;top:332.53px;font-size:12.6px;color:#454b54;font-weight:400;transform:scaleX(1.0630);">Höfn nr.</div>
<svg class="a" style="left:1318px;top:337.40px" width="150" height="2" viewBox="0 0 150 2"><g fill="#b0b5bc"><rect x="142.40" y="0" width="1.2" height="1.4"/><rect x="135.20" y="0" width="1.2" height="1.4"/><rect x="128.00" y="0" width="1.2" height="1.4"/><rect x="120.80" y="0" width="1.2" height="1.4"/><rect x="113.60" y="0" width="1.2" height="1.4"/><rect x="106.40" y="0" width="1.2" height="1.4"/><rect x="99.20" y="0" width="1.2" height="1.4"/><rect x="92.00" y="0" width="1.2" height="1.4"/><rect x="84.80" y="0" width="1.2" height="1.4"/><rect x="77.60" y="0" width="1.2" height="1.4"/><rect x="70.40" y="0" width="1.2" height="1.4"/><rect x="63.20" y="0" width="1.2" height="1.4"/><rect x="56.00" y="0" width="1.2" height="1.4"/><rect x="48.80" y="0" width="1.2" height="1.4"/><rect x="41.60" y="0" width="1.2" height="1.4"/><rect x="34.40" y="0" width="1.2" height="1.4"/><rect x="27.20" y="0" width="1.2" height="1.4"/><rect x="20.00" y="0" width="1.2" height="1.4"/><rect x="12.80" y="0" width="1.2" height="1.4"/><rect x="5.60" y="0" width="1.2" height="1.4"/><rect x="-1.60" y="0" width="1.2" height="1.4"/><rect x="-8.80" y="0" width="1.2" height="1.4"/><rect x="-16.00" y="0" width="1.2" height="1.4"/><rect x="-23.20" y="0" width="1.2" height="1.4"/></g></svg>
<div class="a" style="left:1468px;top:324.80px;width:308px;height:26px;box-sizing:border-box;border:1px solid #8a9098;background:#fff"></div>
<svg class="a" style="left:1758px;top:332.80010000000004px" width="12" height="10" viewBox="0 0 12 10"><path d="M0.4 2.4 L5.8 7.8 L11.2 2.4" fill="none" stroke="#3a3f46" stroke-width="0.9"/></svg>
<div class="t" style="left:1237.01px;top:366.70px;font-size:12.6px;color:#454b54;font-weight:400;transform:scaleX(0.9817);">Hafnarsvæði</div>
<svg class="a" style="left:1318px;top:371.57px" width="150" height="2" viewBox="0 0 150 2"><g fill="#b0b5bc"><rect x="142.40" y="0" width="1.2" height="1.4"/><rect x="135.20" y="0" width="1.2" height="1.4"/><rect x="128.00" y="0" width="1.2" height="1.4"/><rect x="120.80" y="0" width="1.2" height="1.4"/><rect x="113.60" y="0" width="1.2" height="1.4"/><rect x="106.40" y="0" width="1.2" height="1.4"/><rect x="99.20" y="0" width="1.2" height="1.4"/><rect x="92.00" y="0" width="1.2" height="1.4"/><rect x="84.80" y="0" width="1.2" height="1.4"/><rect x="77.60" y="0" width="1.2" height="1.4"/><rect x="70.40" y="0" width="1.2" height="1.4"/><rect x="63.20" y="0" width="1.2" height="1.4"/><rect x="56.00" y="0" width="1.2" height="1.4"/><rect x="48.80" y="0" width="1.2" height="1.4"/><rect x="41.60" y="0" width="1.2" height="1.4"/><rect x="34.40" y="0" width="1.2" height="1.4"/><rect x="27.20" y="0" width="1.2" height="1.4"/><rect x="20.00" y="0" width="1.2" height="1.4"/><rect x="12.80" y="0" width="1.2" height="1.4"/><rect x="5.60" y="0" width="1.2" height="1.4"/><rect x="-1.60" y="0" width="1.2" height="1.4"/></g></svg>
<div class="a" style="left:1468px;top:358.97px;width:308px;height:26px;box-sizing:border-box;border:1px solid #8a9098;background:#fff"></div>
<div class="t" style="left:1472.42px;top:366.53px;font-size:12.8px;color:#212121;font-weight:400;transform:scaleX(0.9586);">NORÐ</div>
<svg class="a" style="left:1758px;top:366.96680000000003px" width="12" height="10" viewBox="0 0 12 10"><path d="M0.4 2.4 L5.8 7.8 L11.2 2.4" fill="none" stroke="#3a3f46" stroke-width="0.9"/></svg>
<div class="t" style="left:1236.99px;top:400.87px;font-size:12.6px;color:#454b54;font-weight:400;transform:scaleX(0.9979);">Brottfarardags.</div>
<svg class="a" style="left:1318px;top:405.73px" width="150" height="2" viewBox="0 0 150 2"><g fill="#b0b5bc"><rect x="142.40" y="0" width="1.2" height="1.4"/><rect x="135.20" y="0" width="1.2" height="1.4"/><rect x="128.00" y="0" width="1.2" height="1.4"/><rect x="120.80" y="0" width="1.2" height="1.4"/><rect x="113.60" y="0" width="1.2" height="1.4"/><rect x="106.40" y="0" width="1.2" height="1.4"/><rect x="99.20" y="0" width="1.2" height="1.4"/><rect x="92.00" y="0" width="1.2" height="1.4"/><rect x="84.80" y="0" width="1.2" height="1.4"/><rect x="77.60" y="0" width="1.2" height="1.4"/><rect x="70.40" y="0" width="1.2" height="1.4"/><rect x="63.20" y="0" width="1.2" height="1.4"/><rect x="56.00" y="0" width="1.2" height="1.4"/><rect x="48.80" y="0" width="1.2" height="1.4"/><rect x="41.60" y="0" width="1.2" height="1.4"/><rect x="34.40" y="0" width="1.2" height="1.4"/><rect x="27.20" y="0" width="1.2" height="1.4"/><rect x="20.00" y="0" width="1.2" height="1.4"/><rect x="12.80" y="0" width="1.2" height="1.4"/></g></svg>
<div class="a" style="left:1468px;top:393.13px;width:308px;height:26px;box-sizing:border-box;border:1px solid #8a9098;background:#fff"></div>
<div class="t" style="left:1472.80px;top:400.70px;font-size:12.8px;color:#212121;font-weight:400;transform:scaleX(0.9300);">24.3.2025</div>
<svg class="a" style="left:1756px;top:400px" width="15" height="14" viewBox="0 0 15 14"><rect x="0.5" y="0.5" width="13" height="12" fill="none" stroke="#2a2a2a" stroke-width="1"/><rect x="1" y="1" width="12" height="2" fill="#a0a0a0"/><path d="M0.5 3.5 H13.5" stroke="#2a2a2a" stroke-width="1"/><g stroke-width="1" stroke-dasharray="1 1.2"><path d="M3 5.2 V10.6" stroke="#7fa0d0"/><path d="M5.6 5.2 V10.6" stroke="#8a5aa0"/><path d="M8.3 5.2 V10.6" stroke="#5a90d0"/><path d="M10.8 5.2 V9" stroke="#d09a70"/></g></svg>
<div class="t" style="left:1236.96px;top:435.03px;font-size:12.6px;color:#454b54;font-weight:400;transform:scaleX(1.0329);">Brottfarartími</div>
<svg class="a" style="left:1318px;top:439.90px" width="150" height="2" viewBox="0 0 150 2"><g fill="#b0b5bc"><rect x="142.40" y="0" width="1.2" height="1.4"/><rect x="135.20" y="0" width="1.2" height="1.4"/><rect x="128.00" y="0" width="1.2" height="1.4"/><rect x="120.80" y="0" width="1.2" height="1.4"/><rect x="113.60" y="0" width="1.2" height="1.4"/><rect x="106.40" y="0" width="1.2" height="1.4"/><rect x="99.20" y="0" width="1.2" height="1.4"/><rect x="92.00" y="0" width="1.2" height="1.4"/><rect x="84.80" y="0" width="1.2" height="1.4"/><rect x="77.60" y="0" width="1.2" height="1.4"/><rect x="70.40" y="0" width="1.2" height="1.4"/><rect x="63.20" y="0" width="1.2" height="1.4"/><rect x="56.00" y="0" width="1.2" height="1.4"/><rect x="48.80" y="0" width="1.2" height="1.4"/><rect x="41.60" y="0" width="1.2" height="1.4"/><rect x="34.40" y="0" width="1.2" height="1.4"/><rect x="27.20" y="0" width="1.2" height="1.4"/><rect x="20.00" y="0" width="1.2" height="1.4"/><rect x="12.80" y="0" width="1.2" height="1.4"/><rect x="5.60" y="0" width="1.2" height="1.4"/></g></svg>
<div class="a" style="left:1468px;top:427.30px;width:308px;height:26px;box-sizing:border-box;border:1px solid #8a9098;background:#fff"></div>
<div class="t" style="left:1472.92px;top:434.87px;font-size:12.8px;color:#212121;font-weight:400;transform:scaleX(0.9326);">01:30:00</div>
<div class="a" style="left:325px;top:369px;width:1px;height:8.8px;background:#c8a27a;"></div>
<div class="a" style="left:325px;top:403.3px;width:1px;height:8.7px;background:#c8a27a;"></div>
<div class="a" style="left:326px;top:364.2px;width:151px;height:50.8px;background:radial-gradient(ellipse 25% 45% at 0% 0%,rgba(200,218,222,1),rgba(200,218,222,0) 100%),radial-gradient(ellipse 90% 70% at 40% 100%,rgba(196,214,218,1) 0%,rgba(196,214,218,0.9) 45%,rgba(196,214,218,0) 100%),linear-gradient(180deg,#e9edee 0%,#e8eced 55%,#e4eaeb 100%);"></div>
<div class="a" style="left:895.5px;top:226px;width:85px;height:20px;background:linear-gradient(90deg,#ececec 0%,#e0e0e0 30%,#dadada 55%,#e6e6e6 80%,#f4f4f4 100%);"></div>
<div class="a" style="left:901px;top:256.5px;width:131px;height:58.3px;background:radial-gradient(ellipse 55% 40% at 65% 45%,rgba(236,239,241,1),rgba(236,239,241,0) 100%),linear-gradient(180deg,rgba(200,218,221,0) 55%,rgba(200,218,221,1) 100%),linear-gradient(100deg,#cbdcdf 0%,#dce5e7 40%,#eaedef 75%,#e8ebed 100%);"></div>
<div class="a" style="left:899px;top:264px;width:1.6px;height:4px;background:#3a6f9a;"></div>
<div class="a" style="left:899.5px;top:269px;width:1.2px;height:4px;background:#3a6f9a;"></div>
<div class="a" style="left:899px;top:301px;width:1.4px;height:9px;background:#2a7fb0;"></div>
<div class="a" style="left:1473px;top:336px;width:1px;height:3px;background:#d8a070;"></div>
<div class="a" style="left:1474px;top:330px;width:53px;height:15.5px;background:linear-gradient(90deg,#d0d0d0,#d8d8d8 60%,#d4d4d4);"></div>
<div class="a" style="left:89px;top:491px;width:1687px;height:1px;background:#d5d8dc;"></div>
<div class="a" style="left:89px;top:526px;width:1687px;height:1px;background:#d5d8dc;"></div>
<div class="t" style="left:88.26px;top:502.53px;font-size:14.5px;color:#505c6d;font-weight:400;transform:scaleX(1.0217);text-shadow:0.45px 0 0 #505c6d">Skipskomulínur</div>
<div class="a" style="left:208px;top:499px;width:1px;height:21px;background:#c8ccd0;"></div>
<svg class="a" style="left:227px;top:501px" width="16" height="15" viewBox="0 0 16 15"><g fill="none" stroke="#0e7c86" stroke-width="1" opacity="0.85"><path d="M1.5 3 H5.8 V4.2"/><path d="M1.5 13 H5.8 V11.8"/></g><rect x="1.2" y="6.2" width="6.3" height="3.6" fill="#0e7c86"/><g fill="none" stroke="#0e7c86" stroke-width="1"><circle cx="11.2" cy="3.9" r="1.6"/><path d="M11.2 0.6 V7.2 M7.9 3.9 H14.5 M8.9 1.6 L13.5 6.2 M13.5 1.6 L8.9 6.2" stroke-width="0.8"/></g></svg>
<div class="t" style="left:244.99px;top:503.87px;font-size:13.5px;color:#262626;font-weight:400;transform:scaleX(0.9381);">Ný lína</div>
<svg class="a" style="left:304px;top:501px" width="16" height="15" viewBox="0 0 16 15"><g fill="none" stroke="#0e7c86" stroke-width="1" opacity="0.85"><path d="M1.5 4.8 H5.3 V5.8"/><path d="M1.5 12.3 H5.3 V11.3"/></g><rect x="1.2" y="7.3" width="5.4" height="3.4" fill="#0e7c86"/><path d="M6.8 5 L14.6 11.5 M14.6 5 L6.8 11.5" stroke="#0e7c86" stroke-width="1.6"/></svg>
<div class="t" style="left:321.82px;top:503.87px;font-size:13.5px;color:#262626;font-weight:400;transform:scaleX(0.9103);">Eyða línu</div>
<svg class="a" style="left:1719px;top:502px" width="16" height="13" viewBox="0 0 16 13"><g fill="none" stroke="#0e7c86" stroke-width="1"><path d="M1.5 3.3 V11.1 H11.5 V10"/><path d="M3.6 8.8 Q4.2 4.9 9.5 4.4 L9.5 1.2 L14.2 4.4 L9.5 8 L9.5 6.3 Q5.8 6.2 3.6 8.8 Z"/></g></svg>
<svg class="a" style="left:1752px;top:502px" width="16" height="13" viewBox="0 0 16 13"><g fill="none" stroke="#0e7c86" stroke-width="1"><path d="M9.3 2.5 H1.5 V11.1 H13.5 V7"/><path d="M1.5 8.3 H7.2 V11.1"/><path d="M8.3 6.6 L12.8 2.3"/></g><path d="M10.8 1.6 L14 1.6 L14 4.8 Z" fill="#0e7c86"/></svg>
<div class="t" style="left:135.98px;top:558.28px;font-size:11.6px;color:#505c6d;font-weight:400;transform:scaleX(0.9316);">Tegund línu</div>
<div class="t" style="left:338.53px;top:558.28px;font-size:11.6px;color:#505c6d;font-weight:400;transform:scaleX(1.0485);">Nr.</div>
<div class="t" style="left:510.87px;top:558.28px;font-size:11.6px;color:#505c6d;font-weight:400;transform:scaleX(0.8967);">Lýsing</div>
<div class="t" style="left:1001.38px;top:558.28px;font-size:11.6px;color:#505c6d;font-weight:400;transform:scaleX(0.9863);">Magn</div>
<div class="t" style="left:1174.88px;top:558.28px;font-size:11.6px;color:#505c6d;font-weight:400;transform:scaleX(0.8839);">Ein.verð</div>
<div class="t" style="left:1346.50px;top:558.28px;font-size:11.6px;color:#505c6d;font-weight:400;transform:scaleX(0.9135);">Afsláttar%</div>
<div class="t" style="left:1489.86px;top:558.28px;font-size:11.6px;color:#505c6d;font-weight:400;transform:scaleX(0.9105);">Heildarverð (SGM)</div>
<div class="t" style="left:1681.10px;top:558.28px;font-size:11.6px;color:#505c6d;font-weight:400;transform:scaleX(0.9317);">Afsláttarupphæð</div>
<div class="a" style="left:89px;top:628px;width:1687px;height:17px;background:#f3f4f6;"></div>
<div class="a" style="left:284px;top:579px;width:49.3px;height:24.3px;background:#b2e8ec;"></div>
<div class="a" style="left:89px;top:578.0px;width:1687px;height:1px;background:#d2d5d9;"></div>
<div class="a" style="left:89px;top:602.8px;width:1687px;height:1px;background:#d2d5d9;"></div>
<div class="a" style="left:89px;top:627.5px;width:1687px;height:1px;background:#d2d5d9;"></div>
<div class="a" style="left:88.5px;top:578px;width:1px;height:50px;background:#d2d5d9;"></div>
<div class="a" style="left:130.0px;top:578px;width:1px;height:50px;background:#d2d5d9;"></div>
<div class="a" style="left:283.0px;top:578px;width:1px;height:50px;background:#d2d5d9;"></div>
<div class="a" style="left:332.8px;top:578px;width:1px;height:50px;background:#d2d5d9;"></div>
<div class="a" style="left:505.5px;top:578px;width:1px;height:50px;background:#d2d5d9;"></div>
<div class="a" style="left:861.0px;top:578px;width:1px;height:50px;background:#d2d5d9;"></div>
<div class="a" style="left:1044.0px;top:578px;width:1px;height:50px;background:#d2d5d9;"></div>
<div class="a" style="left:1227.0px;top:578px;width:1px;height:50px;background:#d2d5d9;"></div>
<div class="a" style="left:1409.1px;top:578px;width:1px;height:50px;background:#d2d5d9;"></div>
<div class="a" style="left:1591.8px;top:578px;width:1px;height:50px;background:#d2d5d9;"></div>
<div class="a" style="left:1774.8px;top:578px;width:1px;height:50px;background:#d2d5d9;"></div>
<svg class="a" style="left:103px;top:584px" width="15" height="14" viewBox="0 0 15 14"><g fill="none" stroke="#3c3c3c" stroke-width="0.95"><path d="M1.3 7 H12.8 M8.3 2.3 L12.9 7 L8.3 11.7"/></g></svg>
<div class="a" style="left:307.7px;top:585.6px;width:1.6px;height:1.6px;background:#111;border-radius:50%"></div>
<div class="a" style="left:307.7px;top:590.85px;width:1.6px;height:1.6px;background:#111;border-radius:50%"></div>
<div class="a" style="left:307.7px;top:596.1px;width:1.6px;height:1.6px;background:#111;border-radius:50%"></div>
<div class="t" style="left:136.87px;top:585.00px;font-size:13px;color:#212121;font-weight:400;transform:scaleX(0.9745);">Gjaldliður</div>
<div class="t" style="left:339.75px;top:585.00px;font-size:13px;color:#212121;font-weight:400;transform:scaleX(0.9460);">4105012</div>
<div class="t" style="left:511.78px;top:585.00px;font-size:13px;color:#212121;font-weight:400;transform:scaleX(0.9771);">Móttaka skipa utan opnunartíma</div>
<div class="t" style="left:1025.06px;top:585.00px;font-size:13px;color:#212121;font-weight:400;transform:scaleX(0.6993);">1</div>
<div class="t" style="left:1177.76px;top:585.00px;font-size:13px;color:#212121;font-weight:400;transform:scaleX(0.9205);">15.500</div>
<div class="t" style="left:1390.28px;top:585.00px;font-size:13px;color:#212121;font-weight:400;transform:scaleX(0.9936);">0</div>
<div class="t" style="left:1542.86px;top:585.00px;font-size:13px;color:#212121;font-weight:400;transform:scaleX(0.9231);">15.500</div>
<div class="t" style="left:1755.28px;top:585.00px;font-size:13px;color:#212121;font-weight:400;transform:scaleX(0.9936);">0</div>
</body></html>
